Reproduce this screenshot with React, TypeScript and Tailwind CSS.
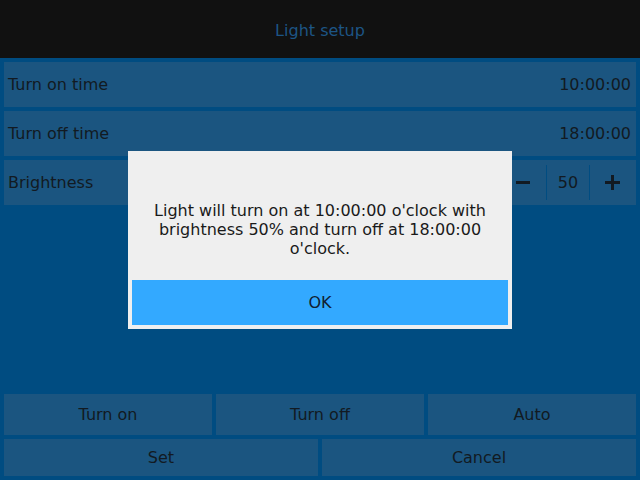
const font = { fontFamily: '"DejaVu Sans", sans-serif' };

const rows = [
  { label: "Turn on time", value: "10:00:00" },
  { label: "Turn off time", value: "18:00:00" },
];

export default function App() {
  return (
    <div
      className="relative w-[640px] h-[480px] flex flex-col bg-[#004c81] text-[16px] leading-[19px] text-[#121a22]"
      style={font}
    >
      <div className="h-[58px] shrink-0 bg-[#111111] flex items-center justify-center pt-[3px]">
        <span className="text-[#1d5585]">Light setup</span>
      </div>

      <div className="flex flex-col gap-1 p-1">
        {rows.map(r => (
          <div key={r.label} className="h-[45px] bg-[#1b5580] flex items-center justify-between pl-1 pr-[5px]">
            <span>{r.label}</span>
            <span>{r.value}</span>
          </div>
        ))}
        <div className="h-[45px] bg-[#1b5580] flex items-center justify-between pl-1">
          <span>Brightness</span>
          <div className="flex items-center h-full">
            <div className="w-[44px] h-full flex items-center justify-center pr-[3px]">
              <div className="w-[14px] h-[3px] bg-[#121a22]" />
            </div>
            <div className="w-px h-[35px] bg-[#004c81]" />
            <div className="w-[42px] h-full flex items-center justify-center">50</div>
            <div className="w-px h-[35px] bg-[#004c81]" />
            <div className="w-[46px] h-full flex items-center justify-center pr-[2px]">
              <svg width="15" height="15" viewBox="0 0 15 15">
                <rect x="0" y="6" width="15" height="3" fill="#121a22" />
                <rect x="6" y="0" width="3" height="15" fill="#121a22" />
              </svg>
            </div>
          </div>
        </div>
      </div>

      <div className="flex-1" />

      <div className="flex flex-col gap-1 px-1 pb-1">
        <div className="grid grid-cols-3 gap-1 h-[41px]">
          <button className="bg-[#1b5580] flex items-center justify-center">Turn on</button>
          <button className="bg-[#1b5580] flex items-center justify-center">Turn off</button>
          <button className="bg-[#1b5580] flex items-center justify-center">Auto</button>
        </div>
        <div className="grid grid-cols-2 gap-1 h-[37px]">
          <button className="bg-[#1b5580] flex items-center justify-center">Set</button>
          <button className="bg-[#1b5580] flex items-center justify-center">Cancel</button>
        </div>
      </div>

      <div className="absolute left-[128px] top-[151px] w-[384px] h-[178px] bg-[#efefef] flex flex-col p-1">
        <div className="flex-1 flex items-start justify-center px-4 pt-[46px] text-center text-[#1a1a1a]">
          Light will turn on at 10:00:00 o'clock with brightness 50% and turn off at 18:00:00 o'clock.
        </div>
        <button className="h-[45px] bg-[#33a9ff] flex items-center justify-center text-[#102030]">OK</button>
      </div>
    </div>
  );
}
